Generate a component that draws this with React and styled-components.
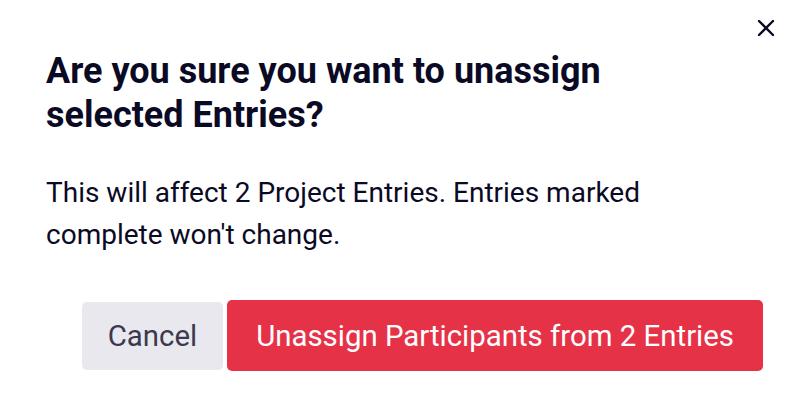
import React from "react";
import styled, { createGlobalStyle } from "styled-components";

const GlobalStyle = createGlobalStyle`
  html, body {
    margin: 0;
    padding: 0;
    background: #ffffff;
  }
  body {
    font-family: Roboto, "Liberation Sans", sans-serif;
  }
`;

const Modal = styled.div`
  position: relative;
  box-sizing: border-box;
  width: 796px;
  height: 418px;
  background: #ffffff;
  padding: 49px 33px 0 46px;
  display: flex;
  flex-direction: column;
`;

const CloseButton = styled.button`
  position: absolute;
  top: 16px;
  right: 18px;
  width: 24px;
  height: 24px;
  padding: 0;
  border: none;
  background: transparent;
  display: flex;
  align-items: center;
  justify-content: center;
  cursor: pointer;
`;

const Title = styled.h1`
  margin: 0;
  max-width: 640px;
  font-size: 36px;
  line-height: 44px;
  font-weight: 700;
  color: #0b0a24;
`;

const Body = styled.p`
  margin: 35px 0 0;
  max-width: 640px;
  font-size: 28px;
  line-height: 42px;
  font-weight: 400;
  color: #0b0a24;
`;

const Actions = styled.div`
  display: flex;
  justify-content: flex-end;
  align-items: center;
  gap: 4px;
  margin-top: 44px;
`;

const Button = styled.button`
  font-family: Roboto, "Liberation Sans", sans-serif;
  font-size: 29.4px;
  border: none;
  border-radius: 5px;
  cursor: pointer;
  padding: 0 ${({ $primary }) => ($primary ? "29px" : "26px")};
  height: ${({ $primary }) => ($primary ? "71px" : "68px")};
  background: ${({ $primary }) => ($primary ? "#e63247" : "#e9e8ee")};
  color: ${({ $primary }) => ($primary ? "#ffffff" : "#3a3a4e")};
`;

const CloseIcon = () => (
  <svg width="18" height="18" viewBox="0 0 18 18">
    <path
      d="M2 2 L16 16 M16 2 L2 16"
      stroke="#0b0a24"
      strokeWidth="2.4"
      strokeLinecap="round"
    />
  </svg>
);

const App = () => {
  return (
    <>
      <GlobalStyle />
      <Modal>
        <CloseButton aria-label="Close">
          <CloseIcon />
        </CloseButton>
        <Title>Are you sure you want to unassign selected Entries?</Title>
        <Body>
          This will affect 2 Project Entries. Entries marked complete won't
          change.
        </Body>
        <Actions>
          <Button>Cancel</Button>
          <Button $primary>Unassign Participants from 2 Entries</Button>
        </Actions>
      </Modal>
    </>
  );
};

export default App;
